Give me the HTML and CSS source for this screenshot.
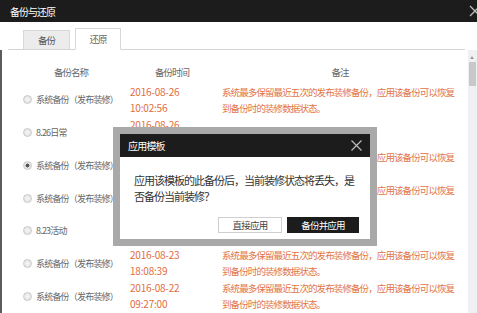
FILE: index.html
```html
<!DOCTYPE html>
<html lang="zh-CN">
<head>
    <meta charset="UTF-8">
    <title>备份与还原</title>
    <link rel="stylesheet" href="styles.css">
</head>
<body>
<div class="window">
    <div class="titlebar">
        <span class="title">备份与还原</span>
        <svg class="win-close" width="12" height="12" viewBox="0 0 12 12"><path d="M1 1L11 11M11 1L1 11" stroke="#bbb" stroke-width="1.3" fill="none"/></svg>
    </div>
    <div class="tabs">
        <a class="tab">备份</a>
        <a class="tab active">还原</a>
    </div>
    <div class="content">
        <div class="list">
            <div class="row head">
                <div class="h-name">备份名称</div>
                <div class="h-time">备份时间</div>
                <div class="h-note">备注</div>
            </div>
            <div class="row">
                <div class="name"><span class="radio"></span>系统备份（发布装修）</div>
                <div class="time">2016-08-26<br>10:02:56</div>
                <div class="note">系统最多保留最近五次的发布装修备份，应用该备份可以恢复到备份时的装修数据状态。</div>
            </div>
            <div class="row">
                <div class="name"><span class="radio"></span>8.26日常</div>
                <div class="time">2016-08-26<br>17:45:12</div>
                <div class="note"></div>
            </div>
            <div class="row">
                <div class="name"><span class="radio checked"></span>系统备份（发布装修）</div>
                <div class="time">2016-08-26<br>09:14:30</div>
                <div class="note">系统最多保留最近五次的发布装修备份，应用该备份可以恢复到备份时的装修数据状态。</div>
            </div>
            <div class="row">
                <div class="name"><span class="radio"></span>系统备份（发布装修）</div>
                <div class="time">2016-08-25<br>20:31:08</div>
                <div class="note">系统最多保留最近五次的发布装修备份，应用该备份可以恢复到备份时的装修数据状态。</div>
            </div>
            <div class="row">
                <div class="name"><span class="radio"></span>8.23活动</div>
                <div class="time">2016-08-23<br>20:02:17</div>
                <div class="note"></div>
            </div>
            <div class="row">
                <div class="name"><span class="radio"></span>系统备份（发布装修）</div>
                <div class="time">2016-08-23<br>18:08:39</div>
                <div class="note">系统最多保留最近五次的发布装修备份，应用该备份可以恢复到备份时的装修数据状态。</div>
            </div>
            <div class="row">
                <div class="name"><span class="radio"></span>系统备份（发布装修）</div>
                <div class="time">2016-08-22<br>09:27:00</div>
                <div class="note">系统最多保留最近五次的发布装修备份，应用该备份可以恢复到备份时的装修数据状态。</div>
            </div>
        </div>
        <div class="scrollbar">
            <span class="arrow"></span>
            <span class="thumb"></span>
        </div>
    </div>

    <div class="dialog">
        <div class="dialog-title">
            <span>应用模板</span>
            <svg class="dialog-close" width="11" height="11" viewBox="0 0 11 11"><path d="M0.5 0.5L10.5 10.5M10.5 0.5L0.5 10.5" stroke="#bdbdbd" stroke-width="1.2" fill="none"/></svg>
        </div>
        <div class="dialog-msg">应用该模板的此备份后，当前装修状态将丢失，是否备份当前装修？</div>
        <div class="dialog-btns">
            <button class="btn">直接应用</button>
            <button class="btn dark">备份并应用</button>
        </div>
    </div>
</div>
</body>
</html>
```

FILE: styles.css
```css
body {
    margin: 0;
    padding: 0;
    background-color: #fff;
    font-family: "Noto Sans CJK SC", "Liberation Sans", sans-serif;
    color: #666;
}

.window {
    position: relative;
    width: 477px;
    height: 313px;
    overflow: hidden;
    background-color: #fff;
}

.titlebar {
    height: 22px;
    background-color: #1c1c1c;
    color: #fff;
    position: relative;
}
.titlebar .title {
    display: block;
    padding: 2px 0 0 10px;
    font-size: 10px;
    letter-spacing: -1px;
    line-height: 20px;
}
.win-close {
    position: absolute;
    right: -4px;
    top: 5px;
}

.tabs {
    display: flex;
    align-items: flex-end;
    gap: 5px;
    height: 27px;
    margin: 0 12px 0 8px;
    padding-left: 15px;
    border-bottom: 1px solid #d4d4d4;
}
.tab {
    box-sizing: border-box;
    width: 47px;
    height: 19px;
    background-color: #ececec;
    border: 1px solid #d8d8d8;
    border-bottom: none;
    text-align: center;
    font-size: 9.5px;
    letter-spacing: -1px;
    line-height: 18px;
    color: #555;
}
.tab.active {
    width: 46px;
    height: 22px;
    margin-bottom: -1px;
    background-color: #fff;
    border-bottom: 1px solid #fff;
    line-height: 20px;
    color: #666;
}

.content {
    display: flex;
    height: 263px;
    border-left: 2px solid #5c5c5c;
}
.list {
    flex: 1;
    padding-left: 6px;
}

.row {
    display: grid;
    grid-template-columns: 122px 92px 236px;
    align-items: center;
    height: 32.7px;
}
.row.head {
    height: 33.6px;
    align-items: start;
    padding-top: 14px;
    box-sizing: border-box;
    font-size: 9.5px;
    letter-spacing: -1px;
    line-height: 16px;
    color: #666;
    text-align: center;
}
.h-name {
    padding-left: 4px;
}
.h-time {
    padding-right: 8px;
}

.name {
    display: flex;
    align-items: center;
    padding-left: 15px;
    font-size: 9px;
    letter-spacing: -0.8px;
    color: #666;
    white-space: nowrap;
}
.radio {
    box-sizing: border-box;
    width: 9px;
    height: 9px;
    margin-right: 4px;
    border-radius: 50%;
    border: 1px solid #c8c8c8;
    background: radial-gradient(circle, #f6f6f6 0%, #dedede 100%);
}
.radio.checked {
    background: radial-gradient(circle, #555 0, #555 1.8px, #e6e6e6 2.2px);
}

.time {
    font-size: 10px;
    letter-spacing: -0.2px;
    line-height: 16px;
    color: #df6d3e;
}
.note {
    font-size: 9.5px;
    letter-spacing: -0.9px;
    line-height: 16px;
    color: #e27547;
}

.scrollbar {
    position: relative;
    width: 9px;
    background-color: #f0eff3;
}
.scrollbar .arrow {
    position: absolute;
    left: 2px;
    top: 6px;
    border-left: 2.5px solid transparent;
    border-right: 2.5px solid transparent;
    border-bottom: 3px solid #9a9a9a;
}
.scrollbar .thumb {
    position: absolute;
    left: 1px;
    top: 12px;
    width: 7px;
    height: 24px;
    background-color: #c8c8c8;
}

/* modal */
.dialog {
    position: absolute;
    left: 113px;
    top: 127px;
    width: 250px;
    border: 7px solid #a9a9a9;
    background-color: #fff;
}
.dialog-title {
    display: flex;
    justify-content: space-between;
    align-items: center;
    height: 23px;
    padding: 0 8px;
    background-color: #1c1c1c;
    color: #fff;
    font-size: 10px;
    letter-spacing: -0.8px;
}
.dialog-msg {
    padding: 15px 14px 0 14px;
    font-size: 11px;
    letter-spacing: -1px;
    line-height: 16px;
    color: #333;
}
.dialog-btns {
    display: flex;
    justify-content: flex-end;
    gap: 5px;
    margin-top: 13px;
    padding: 0 11px 6px 0;
}
.btn {
    box-sizing: border-box;
    width: 64px;
    height: 16px;
    padding: 0;
    background-color: #fff;
    border: 1px solid #cfcfcf;
    font-family: "Noto Sans CJK SC", sans-serif;
    font-size: 9.5px;
    letter-spacing: -0.8px;
    line-height: 14px;
    color: #444;
}
.btn.dark {
    width: 72px;
    background-color: #1c1c1c;
    border-color: #1c1c1c;
    color: #fff;
}
```
